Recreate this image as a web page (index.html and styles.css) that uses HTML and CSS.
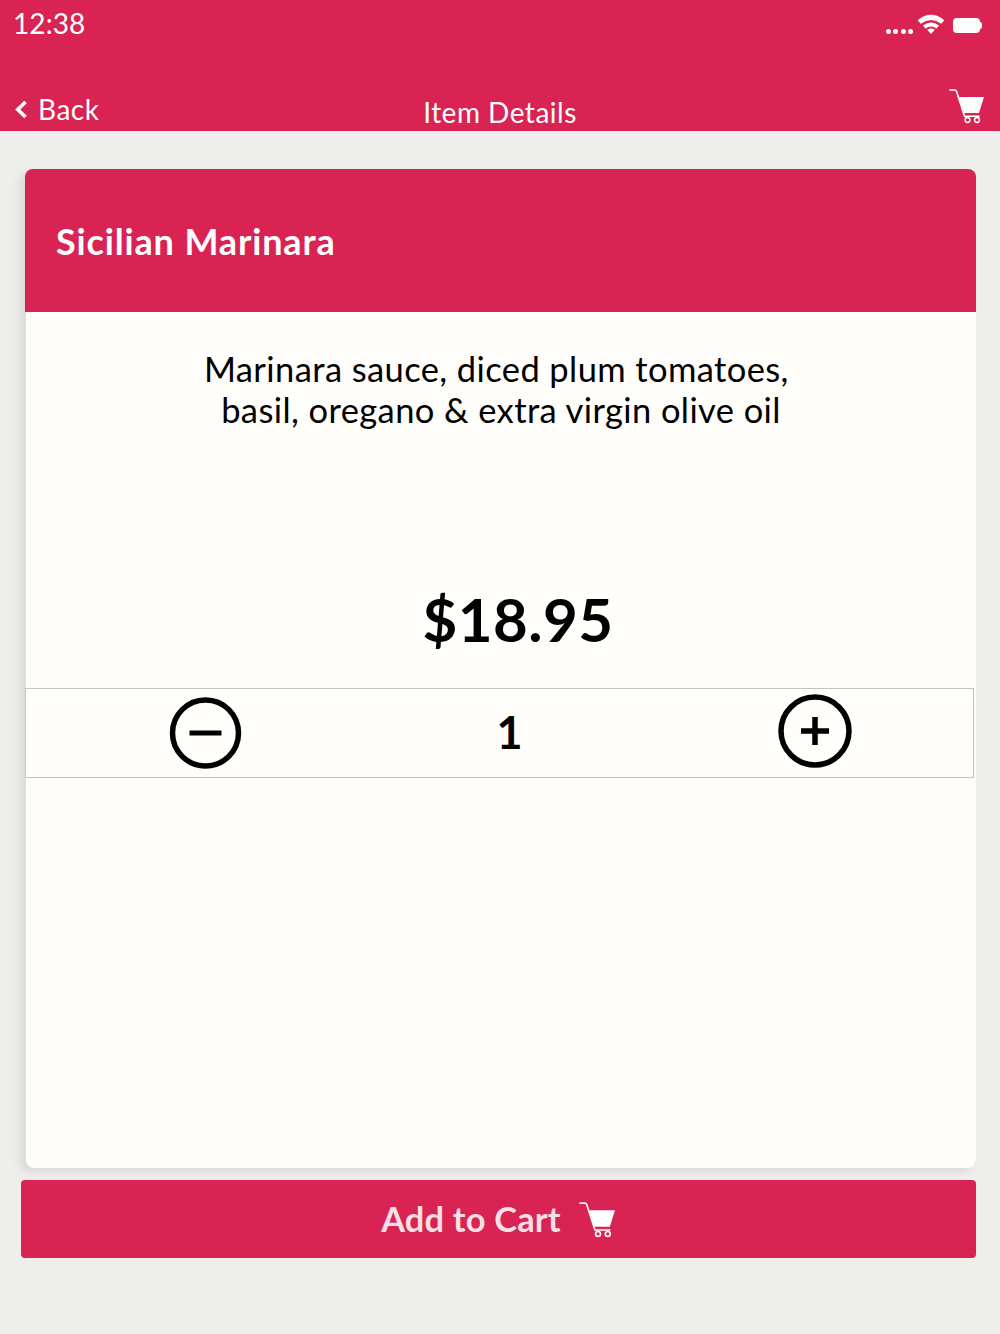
FILE: index.html
```html
<!DOCTYPE html>
<html lang="en">

<head>
    <meta charset="UTF-8">
    <meta name="viewport" content="width=device-width, initial-scale=1.0">
    <title>Item Details</title>
    <link rel="stylesheet" href="styles.css">
</head>

<body>

    <svg class="icon-defs" width="0" height="0">
        <defs>
            <symbol id="cart" viewBox="0 0 36 36">
                <path d="M1 2 H5.5 Q7 2 7.6 3.6 L15.5 28.2 H30" fill="none" stroke="currentColor" stroke-width="1.6" stroke-linecap="round" stroke-linejoin="round"></path>
                <path d="M10 9 H35 L30 25 H15 z" fill="currentColor"></path>
                <circle cx="18.5" cy="32" r="2.4" fill="none" stroke="currentColor" stroke-width="1.5"></circle>
                <circle cx="28" cy="32" r="2.4" fill="none" stroke="currentColor" stroke-width="1.5"></circle>
            </symbol>
        </defs>
    </svg>

    <header class="topbar">
        <div class="status">
            <span class="time">12:38</span>
            <div class="status-icons">
                <span class="dots"><i></i><i></i><i></i><i></i></span>
                <svg class="wifi" width="28" height="20" viewBox="0 0 28 21">
                    <path d="M0 6.5 Q14 -5 28 6.5 L24.8 10.2 Q14 2.4 3.2 10.2 z" fill="#fff"></path>
                    <path d="M5.5 12 Q14 5.6 22.5 12 L19.8 15.2 Q14 11 8.2 15.2 z" fill="#fff"></path>
                    <path d="M10 16.6 Q14 13.6 18 16.6 L14 21 z" fill="#fff"></path>
                </svg>
                <span class="battery"></span>
            </div>
        </div>
        <nav class="navrow">
            <a class="back">
                <svg width="12" height="19" viewBox="0 0 12 19">
                    <path d="M10.5 2 L2.8 9.5 L10.5 17" fill="none" stroke="#fff" stroke-width="3.6"></path>
                </svg>
                Back
            </a>
            <span class="nav-title">Item Details</span>
            <svg class="nav-cart" width="36" height="36"><use href="#cart"></use></svg>
        </nav>
    </header>

    <main class="content">
        <section class="card">
            <div class="card-head">Sicilian Marinara</div>
            <div class="card-body">
                <p class="desc">Marinara sauce, diced plum tomatoes,&nbsp;<br>basil, oregano &amp; extra virgin olive oil</p>
                <div class="price">$18.95</div>
                <div class="qty">
                    <svg class="qty-btn minus" width="74" height="74" viewBox="0 0 74 74">
                        <circle cx="36.5" cy="37" r="33" fill="none" stroke="#000" stroke-width="5.5"></circle>
                        <path d="M20.5 37 H52.5" stroke="#000" stroke-width="5"></path>
                    </svg>
                    <span class="qty-num">1</span>
                    <svg class="qty-btn plus" width="74" height="74" viewBox="0 0 74 74">
                        <circle cx="37" cy="37" r="34" fill="none" stroke="#000" stroke-width="5.5"></circle>
                        <path d="M23 37 H51 M37 23 V51" stroke="#000" stroke-width="5.5"></path>
                    </svg>
                </div>
            </div>
        </section>

        <button class="add-btn" type="button">
            Add to Cart
            <svg width="37" height="37"><use href="#cart"></use></svg>
        </button>
    </main>

</body>

</html>
```

FILE: styles.css
```css
* {
    box-sizing: border-box;
}

html,
body {
    margin: 0;
    height: 1334px;
    overflow: hidden;
}

body {
    background-color: #eeeeed;
    font-family: Lato, "Open Sans", sans-serif;
    color: #000;
}

.icon-defs {
    position: absolute;
}

.topbar {
    height: 131px;
    background-color: #d92353;
    color: #fff;
    display: flex;
    flex-direction: column;
    justify-content: space-between;
}

.status {
    display: flex;
    justify-content: space-between;
    padding: 6px 18px 0 13px;
}

.time {
    font-size: 28px;
    line-height: 34px;
    letter-spacing: 0.1px;
}

.status-icons {
    display: flex;
    align-items: flex-start;
    padding-top: 8px;
}

.dots {
    display: flex;
    gap: 2.4px;
    margin: 15px 4px 0 0;
}

.dots i {
    width: 5px;
    height: 5px;
    border-radius: 50%;
    background-color: #fff;
}

.wifi {
    margin-right: 8px;
}

.battery {
    position: relative;
    width: 27px;
    height: 15px;
    margin: 4px 2px 0 0;
    border-radius: 4px;
    background-color: #fff;
}

.battery::after {
    content: "";
    position: absolute;
    top: 4px;
    right: -2px;
    width: 2px;
    height: 7px;
    border-radius: 0 2px 2px 0;
    background-color: #fff;
}

.navrow {
    display: grid;
    grid-template-columns: 1fr auto 1fr;
    align-items: end;
    padding: 0 15px 0 15px;
    height: 46px;
}

.back {
    display: flex;
    align-items: center;
    gap: 11px;
    font-size: 28px;
    line-height: 34px;
    letter-spacing: 0.5px;
    margin-bottom: 5px;
}

.back svg {
    margin-top: 1px;
}

.nav-title {
    font-size: 28px;
    line-height: 34px;
    letter-spacing: 0.5px;
    margin-bottom: 2px;
}

.nav-cart {
    justify-self: end;
    margin-bottom: 7px;
    color: #fff;
}

.content {
    padding: 38px 24px 0 21px;
}

.card {
    margin-left: 4px;
    height: 999px;
    display: flex;
    flex-direction: column;
    border-radius: 8px;
    overflow: hidden;
    background-color: #dededc;
    box-shadow: -5px 4px 10px rgba(0, 0, 0, 0.09);
}

.card-head {
    height: 143px;
    flex-shrink: 0;
    background-color: #d92353;
    color: #fff;
    font-size: 36px;
    font-weight: 700;
    line-height: 144px;
    letter-spacing: 0.85px;
    padding-left: 31px;
}

.card-body {
    flex: 1;
    margin-left: 1px;
    display: flex;
    flex-direction: column;
    border-radius: 0 0 8px 8px;
    background-color: #fffefa;
}

.desc {
    margin: 36px 0 0 0;
    text-align: center;
    font-size: 34.5px;
    line-height: 41px;
    letter-spacing: 0.4px;
}

.price {
    margin: 153px 0 0 34px;
    text-align: center;
    font-size: 60px;
    font-weight: 700;
    line-height: 72px;
    letter-spacing: 0.5px;
}

.qty {
    height: 90px;
    margin: 33px 2px 0 -1px;
    display: grid;
    grid-template-columns: 360px 1fr 316px;
    align-items: center;
    justify-items: center;
    border: 1px solid #c4c4c0;
}

.qty-btn {
    display: block;
}

.plus {
    transform: translate(0, -2px);
}

.qty-num {
    font-size: 45px;
    font-weight: 700;
    margin: 0 24px 2px 0;
}

.add-btn {
    width: 955px;
    height: 78px;
    margin-top: 12px;
    display: flex;
    align-items: center;
    justify-content: center;
    gap: 18px;
    padding: 0 0 2px 0;
    border: 0;
    border-radius: 4px;
    background-color: #d92353;
    color: #f7dfe5;
    font-family: inherit;
    font-size: 34.5px;
    font-weight: 700;
    letter-spacing: 0.15px;
}

.add-btn svg {
    margin-top: 2px;
    color: #fff;
}
```
